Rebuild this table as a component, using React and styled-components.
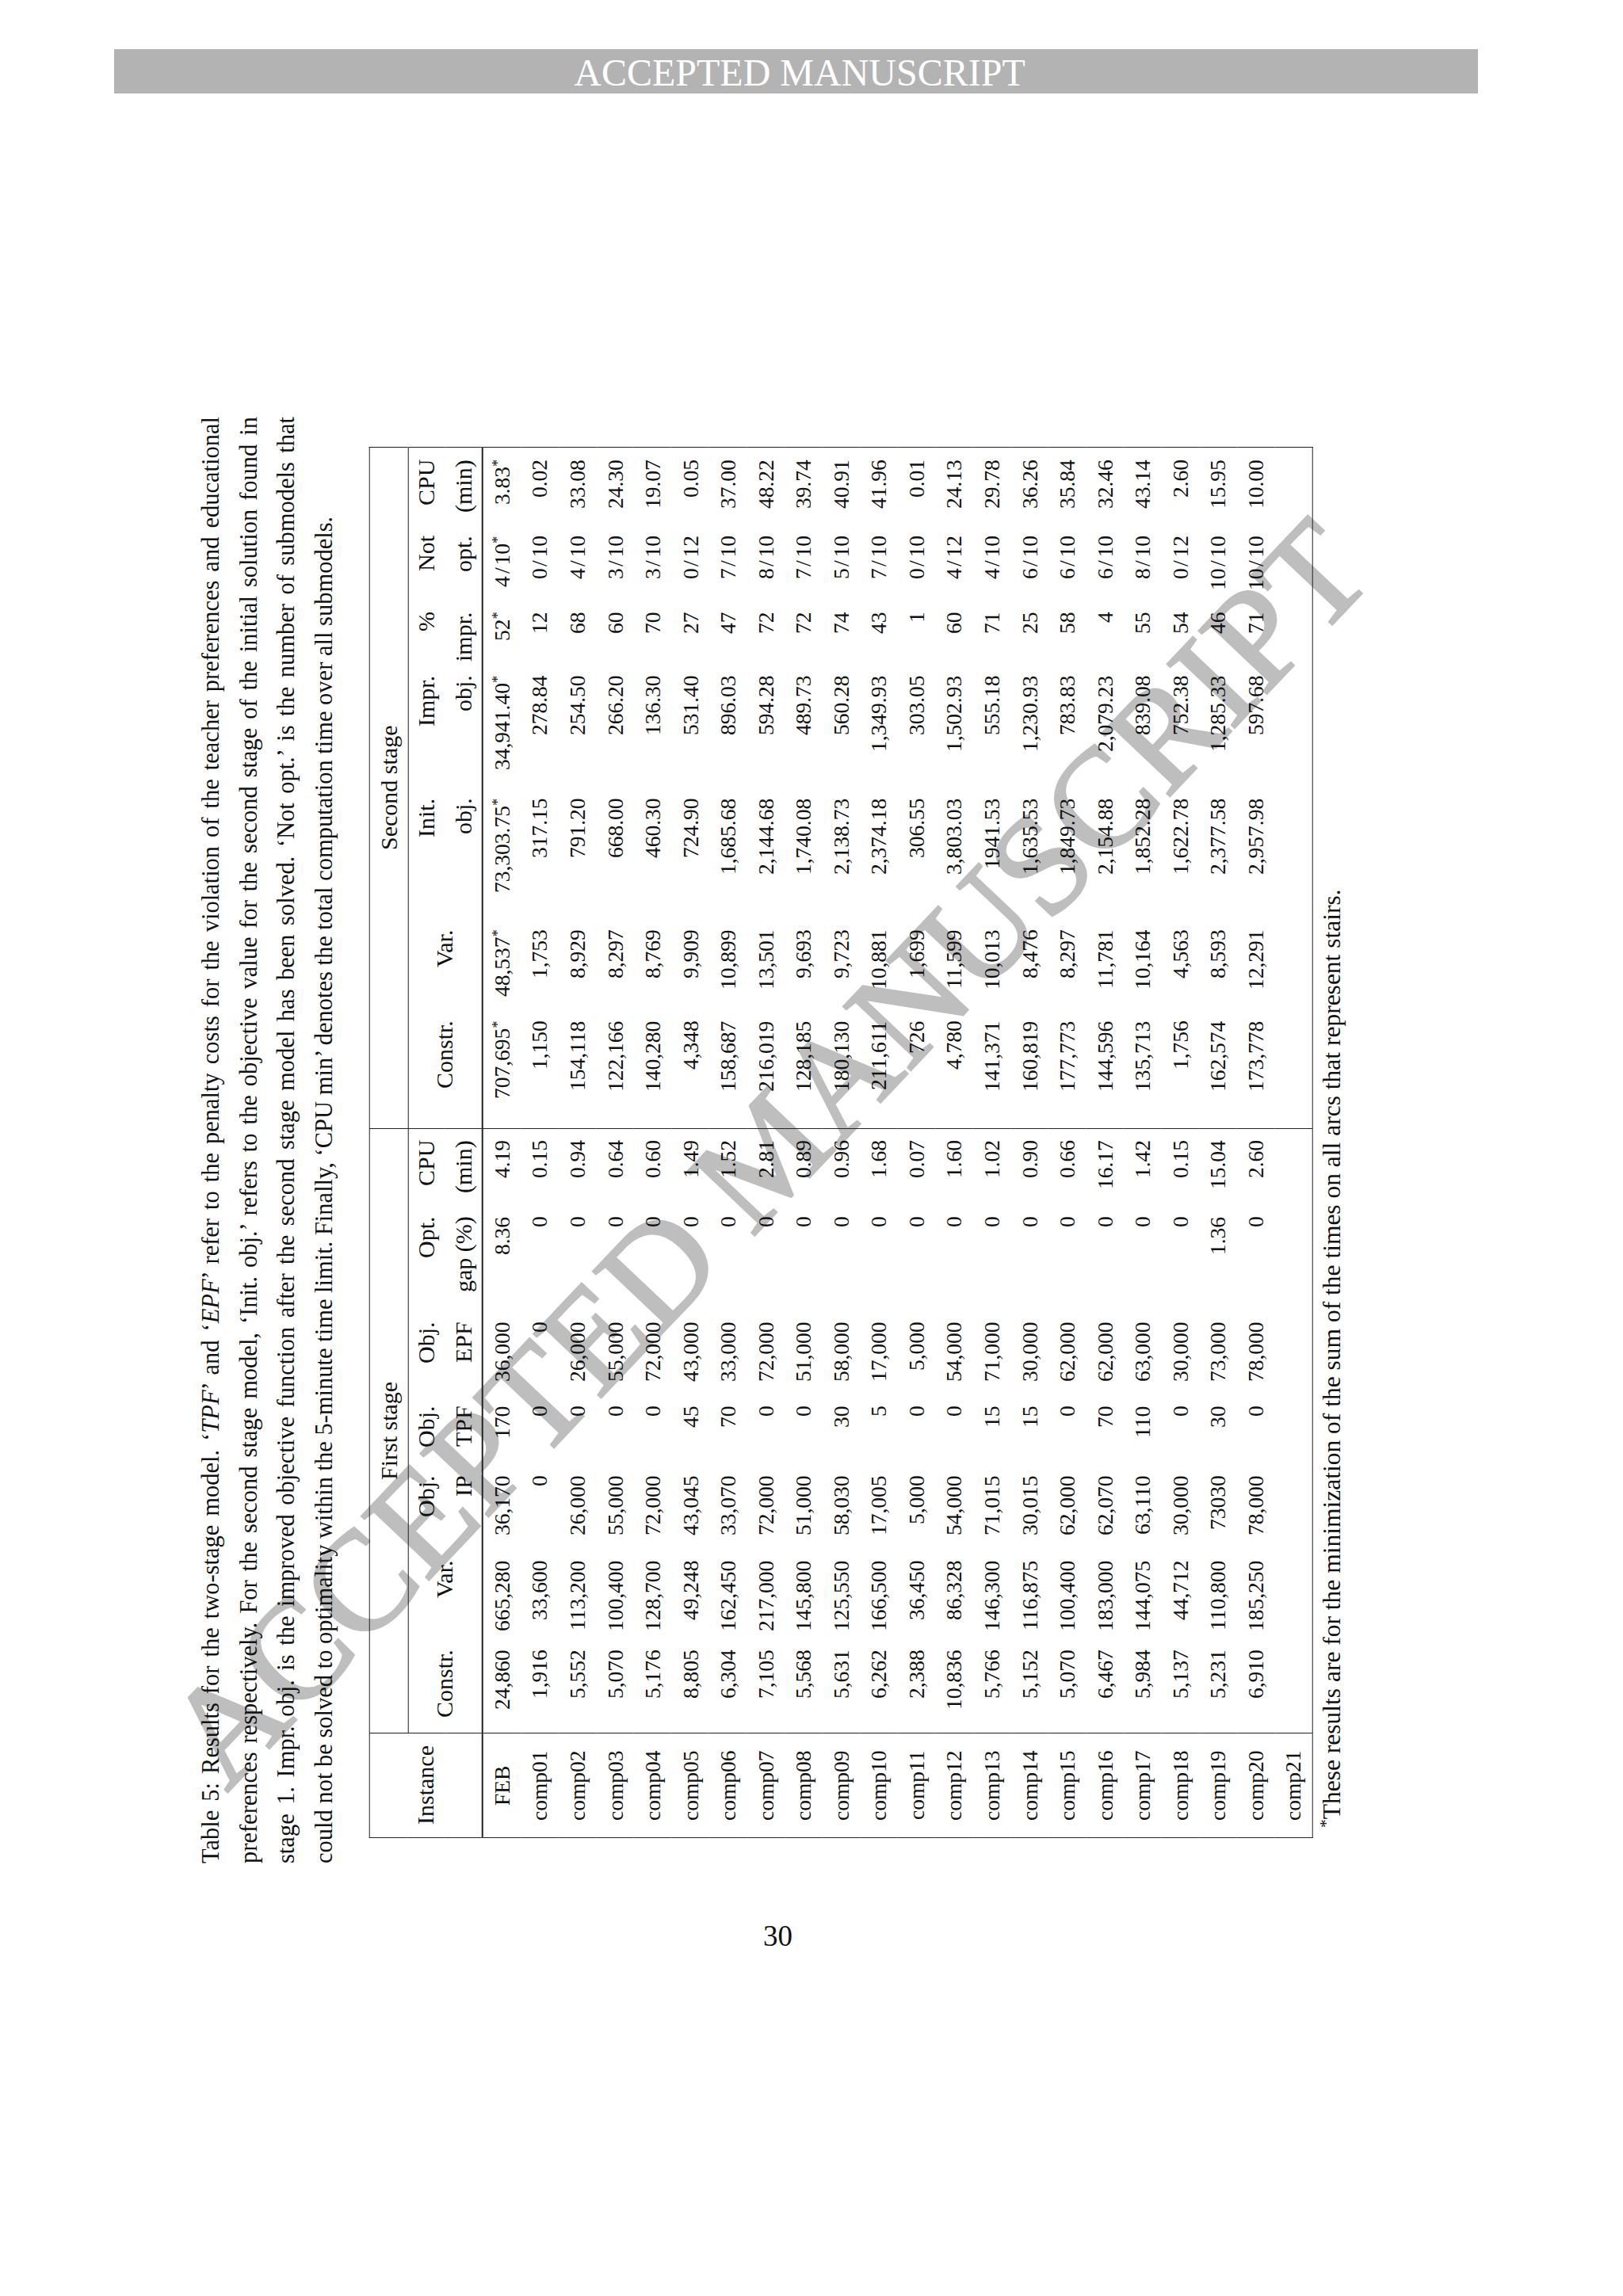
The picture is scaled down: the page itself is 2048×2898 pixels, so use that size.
import React from 'react';
import styled, { createGlobalStyle } from 'styled-components';

const GlobalStyle = createGlobalStyle`
  html, body { margin: 0; padding: 0; background: #fff; }
  body { font-family: "Liberation Serif", "Times New Roman", serif; color: #111; }
`;

const Page = styled.div`
  position: relative;
  display: flow-root;
  width: 2048px;
  height: 2898px;
  overflow: hidden;
  background: #fff;
`;

const Banner = styled.div`
  box-sizing: border-box;
  margin: 62px 0 0 144px;
  width: 1721px;
  height: 56px;
  padding-left: 9px;
  background: #b3b3b3;
  color: #fff;
  font-size: 48px;
  line-height: 60px;
  text-align: center;
  white-space: nowrap;
  overflow: hidden;
`;

const Watermark = styled.div`
  position: absolute;
  left: ${(p) => p.$x}px;
  top: ${(p) => p.$y}px;
  transform: translate(-50%, -50%) rotate(${(p) => p.$angle}deg);
  font-size: 178px;
  line-height: 1;
  white-space: nowrap;
  color: #bebebe;
  -webkit-text-stroke: 3px #bebebe;
  pointer-events: none;
  z-index: 0;
`;

const Sideways = styled.div`
  position: relative;
  z-index: 1;
  margin: 408px 0 0 243px;
  writing-mode: vertical-rl;
  text-orientation: sideways;
  transform: rotate(180deg);
  inline-size: 1826px;
`;

const Caption = styled.div`
  font-size: 30.5px;
  line-height: 47.7px;
`;

const CapLine = styled.div`
  text-align: justify;
  text-align-last: ${(p) => (p.$last ? 'start' : 'justify')};
`;

const TableBlock = styled.div`
  margin-block-start: 32px;
  margin-inline-start: 32px;
  inline-size: 1755px;
`;

const Table = styled.table`
  border-collapse: collapse;
  table-layout: fixed;
  inline-size: 1755px;
  font-size: 27.5px;
  border: 1.5px solid #222;
`;

const Col = styled.col`
  inline-size: ${(p) => p.$w}px;
`;

const Head = styled.thead`
  border-block-end: 2px solid #222;
`;

const Th = styled.th`
  font-weight: normal;
  font-size: 30px;
  padding: 0;
  padding-inline-start: 7px;
  padding-inline-end: ${(p) => p.$pe ?? 7}px;
  line-height: ${(p) => (p.$group ? 47.5 : 46.3)}px;
  text-align: ${(p) => (p.$center ? 'center' : 'end')};
  vertical-align: middle;
  white-space: nowrap;
  border-inline-end: ${(p) => (p.$rule ? '1.5px solid #222' : '0')};
  border-block-end: ${(p) => (p.$under ? '1.5px solid #222' : '0')};
`;

const Td = styled.td`
  padding: 0;
  padding-inline-start: 7px;
  padding-inline-end: ${(p) => p.$pe ?? 7}px;
  line-height: 47.55px;
  text-align: ${(p) => (p.$center ? 'center' : 'end')};
  vertical-align: middle;
  white-space: nowrap;
  border-inline-end: ${(p) => (p.$rule ? '1.5px solid #222' : '0')};
`;

const Sup = styled.sup`
  font-size: 0.68em;
  line-height: 0;
  vertical-align: 0.5em;
`;

const Slash = styled.span`
  margin-inline: 3px;
`;

const Em = styled.i`
  font-style: italic;
`;

const Footnote = styled.div`
  font-size: 31.5px;
  line-height: 47.8px;
  padding-inline-start: 13px;
  white-space: nowrap;
`;

const PageNum = styled.div`
  box-sizing: border-box;
  margin: 71px 0 0 144px;
  width: 1721px;
  padding-right: 46px;
  text-align: center;
  font-size: 37px;
  line-height: 42px;
`;

const COLS = [132, 112, 113, 107, 88, 106, 133, 104, 143, 115, 166, 155, 80, 96, 105];

const ROWS = [
  ['FEB', '24,860', '665,280', '36,170', '170', '36,000', '8.36', '4.19', '707,695*', '48,537*', '73,303.75*', '34,941.40*', '52*', '4/10*', '3.83*'],
  ['comp01', '1,916', '33,600', '0', '0', '0', '0', '0.15', '1,150', '1,753', '317.15', '278.84', '12', '0/10', '0.02'],
  ['comp02', '5,552', '113,200', '26,000', '0', '26,000', '0', '0.94', '154,118', '8,929', '791.20', '254.50', '68', '4/10', '33.08'],
  ['comp03', '5,070', '100,400', '55,000', '0', '55,000', '0', '0.64', '122,166', '8,297', '668.00', '266.20', '60', '3/10', '24.30'],
  ['comp04', '5,176', '128,700', '72,000', '0', '72,000', '0', '0.60', '140,280', '8,769', '460.30', '136.30', '70', '3/10', '19.07'],
  ['comp05', '8,805', '49,248', '43,045', '45', '43,000', '0', '1.49', '4,348', '9,909', '724.90', '531.40', '27', '0/12', '0.05'],
  ['comp06', '6,304', '162,450', '33,070', '70', '33,000', '0', '1.52', '158,687', '10,899', '1,685.68', '896.03', '47', '7/10', '37.00'],
  ['comp07', '7,105', '217,000', '72,000', '0', '72,000', '0', '2.81', '216,019', '13,501', '2,144.68', '594.28', '72', '8/10', '48.22'],
  ['comp08', '5,568', '145,800', '51,000', '0', '51,000', '0', '0.89', '128,185', '9,693', '1,740.08', '489.73', '72', '7/10', '39.74'],
  ['comp09', '5,631', '125,550', '58,030', '30', '58,000', '0', '0.96', '180,130', '9,723', '2,138.73', '560.28', '74', '5/10', '40.91'],
  ['comp10', '6,262', '166,500', '17,005', '5', '17,000', '0', '1.68', '211,611', '10,881', '2,374.18', '1,349.93', '43', '7/10', '41.96'],
  ['comp11', '2,388', '36,450', '5,000', '0', '5,000', '0', '0.07', '726', '1,699', '306.55', '303.05', '1', '0/10', '0.01'],
  ['comp12', '10,836', '86,328', '54,000', '0', '54,000', '0', '1.60', '4,780', '11,599', '3,803.03', '1,502.93', '60', '4/12', '24.13'],
  ['comp13', '5,766', '146,300', '71,015', '15', '71,000', '0', '1.02', '141,371', '10,013', '1941.53', '555.18', '71', '4/10', '29.78'],
  ['comp14', '5,152', '116,875', '30,015', '15', '30,000', '0', '0.90', '160,819', '8,476', '1,635.53', '1,230.93', '25', '6/10', '36.26'],
  ['comp15', '5,070', '100,400', '62,000', '0', '62,000', '0', '0.66', '177,773', '8,297', '1,849.73', '783.83', '58', '6/10', '35.84'],
  ['comp16', '6,467', '183,000', '62,070', '70', '62,000', '0', '16.17', '144,596', '11,781', '2,154.88', '2,079.23', '4', '6/10', '32.46'],
  ['comp17', '5,984', '144,075', '63,110', '110', '63,000', '0', '1.42', '135,713', '10,164', '1,852.28', '839.08', '55', '8/10', '43.14'],
  ['comp18', '5,137', '44,712', '30,000', '0', '30,000', '0', '0.15', '1,756', '4,563', '1,622.78', '752.38', '54', '0/12', '2.60'],
  ['comp19', '5,231', '110,800', '73030', '30', '73,000', '1.36', '15.04', '162,574', '8,593', '2,377.58', '1,285.33', '46', '10/10', '15.95'],
  ['comp20', '6,910', '185,250', '78,000', '0', '78,000', '0', '2.60', '173,778', '12,291', '2,957.98', '597.68', '71', '10/10', '10.00'],
  ['comp21', '', '', '', '', '', '', '', '', '', '', '', '', '', ''],
];

function Value({ text }) {
  let body = text;
  let star = false;
  if (body.endsWith('*')) {
    body = body.slice(0, -1);
    star = true;
  }
  const slash = body.indexOf('/');
  return (
    <>
      {slash >= 0 ? (
        <>
          {body.slice(0, slash)}
          <Slash>/</Slash>
          {body.slice(slash + 1)}
        </>
      ) : (
        body
      )}
      {star && <Sup>*</Sup>}
    </>
  );
}

function padEnd(i) {
  if (i === 7) return 14;
  if (i === 14) return 15;
  return 7;
}

export default function App() {
  return (
    <Page>
      <GlobalStyle />
      <Banner>ACCEPTED MANUSCRIPT</Banner>
      <Watermark $x={968} $y={1455} $angle={-46.6}>
        ACCEPTED MANUSCRIPT
      </Watermark>
      <Sideways>
        <Caption>
          <CapLine>
            Table 5: Results for the two-stage model. ‘<Em>TPF</Em>’ and ‘<Em>EPF</Em>’ refer to the penalty costs for the violation of the teacher preferences and educational
          </CapLine>
          <CapLine>
            preferences respectively. For the second stage model, ‘Init. obj.’ refers to the objective value for the second stage of the initial solution found in
          </CapLine>
          <CapLine>
            stage 1. Impr. obj. is the improved objective function after the second stage model has been solved. ‘Not opt.’ is the number of submodels that
          </CapLine>
          <CapLine $last>
            could not be solved to optimality within the 5-minute time limit. Finally, ‘CPU min’ denotes the total computation time over all submodels.
          </CapLine>
        </Caption>
        <TableBlock>
          <Table>
            <colgroup>
              {COLS.map((w, i) => (
                <Col key={i} $w={w} />
              ))}
            </colgroup>
            <Head>
              <tr>
                <Th rowSpan={3} $center $rule>
                  Instance
                </Th>
                <Th colSpan={7} $center $rule $under $group>
                  First stage
                </Th>
                <Th colSpan={7} $center $under $group>
                  Second stage
                </Th>
              </tr>
              <tr>
                <Th rowSpan={2}>Constr.</Th>
                <Th rowSpan={2}>Var.</Th>
                <Th>Obj.</Th>
                <Th>Obj.</Th>
                <Th>Obj.</Th>
                <Th>Opt.</Th>
                <Th $rule $pe={14}>
                  CPU
                </Th>
                <Th rowSpan={2}>Constr.</Th>
                <Th rowSpan={2}>Var.</Th>
                <Th>Init.</Th>
                <Th>Impr.</Th>
                <Th>%</Th>
                <Th>Not</Th>
                <Th $pe={15}>CPU</Th>
              </tr>
              <tr>
                <Th>IP</Th>
                <Th>TPF</Th>
                <Th>EPF</Th>
                <Th>gap (%)</Th>
                <Th $rule $pe={14}>
                  (min)
                </Th>
                <Th>obj.</Th>
                <Th>obj.</Th>
                <Th>impr.</Th>
                <Th>opt.</Th>
                <Th $pe={15}>(min)</Th>
              </tr>
            </Head>
            <tbody>
              {ROWS.map((row) => (
                <tr key={row[0]}>
                  {row.map((cell, i) => (
                    <Td key={i} $center={i === 0} $rule={i === 0 || i === 7} $pe={padEnd(i)}>
                      <Value text={cell} />
                    </Td>
                  ))}
                </tr>
              ))}
            </tbody>
          </Table>
          <Footnote>
            <Sup>*</Sup>These results are for the minimization of the sum of the times on all arcs that represent stairs.
          </Footnote>
        </TableBlock>
      </Sideways>
      <PageNum>30</PageNum>
    </Page>
  );
}
